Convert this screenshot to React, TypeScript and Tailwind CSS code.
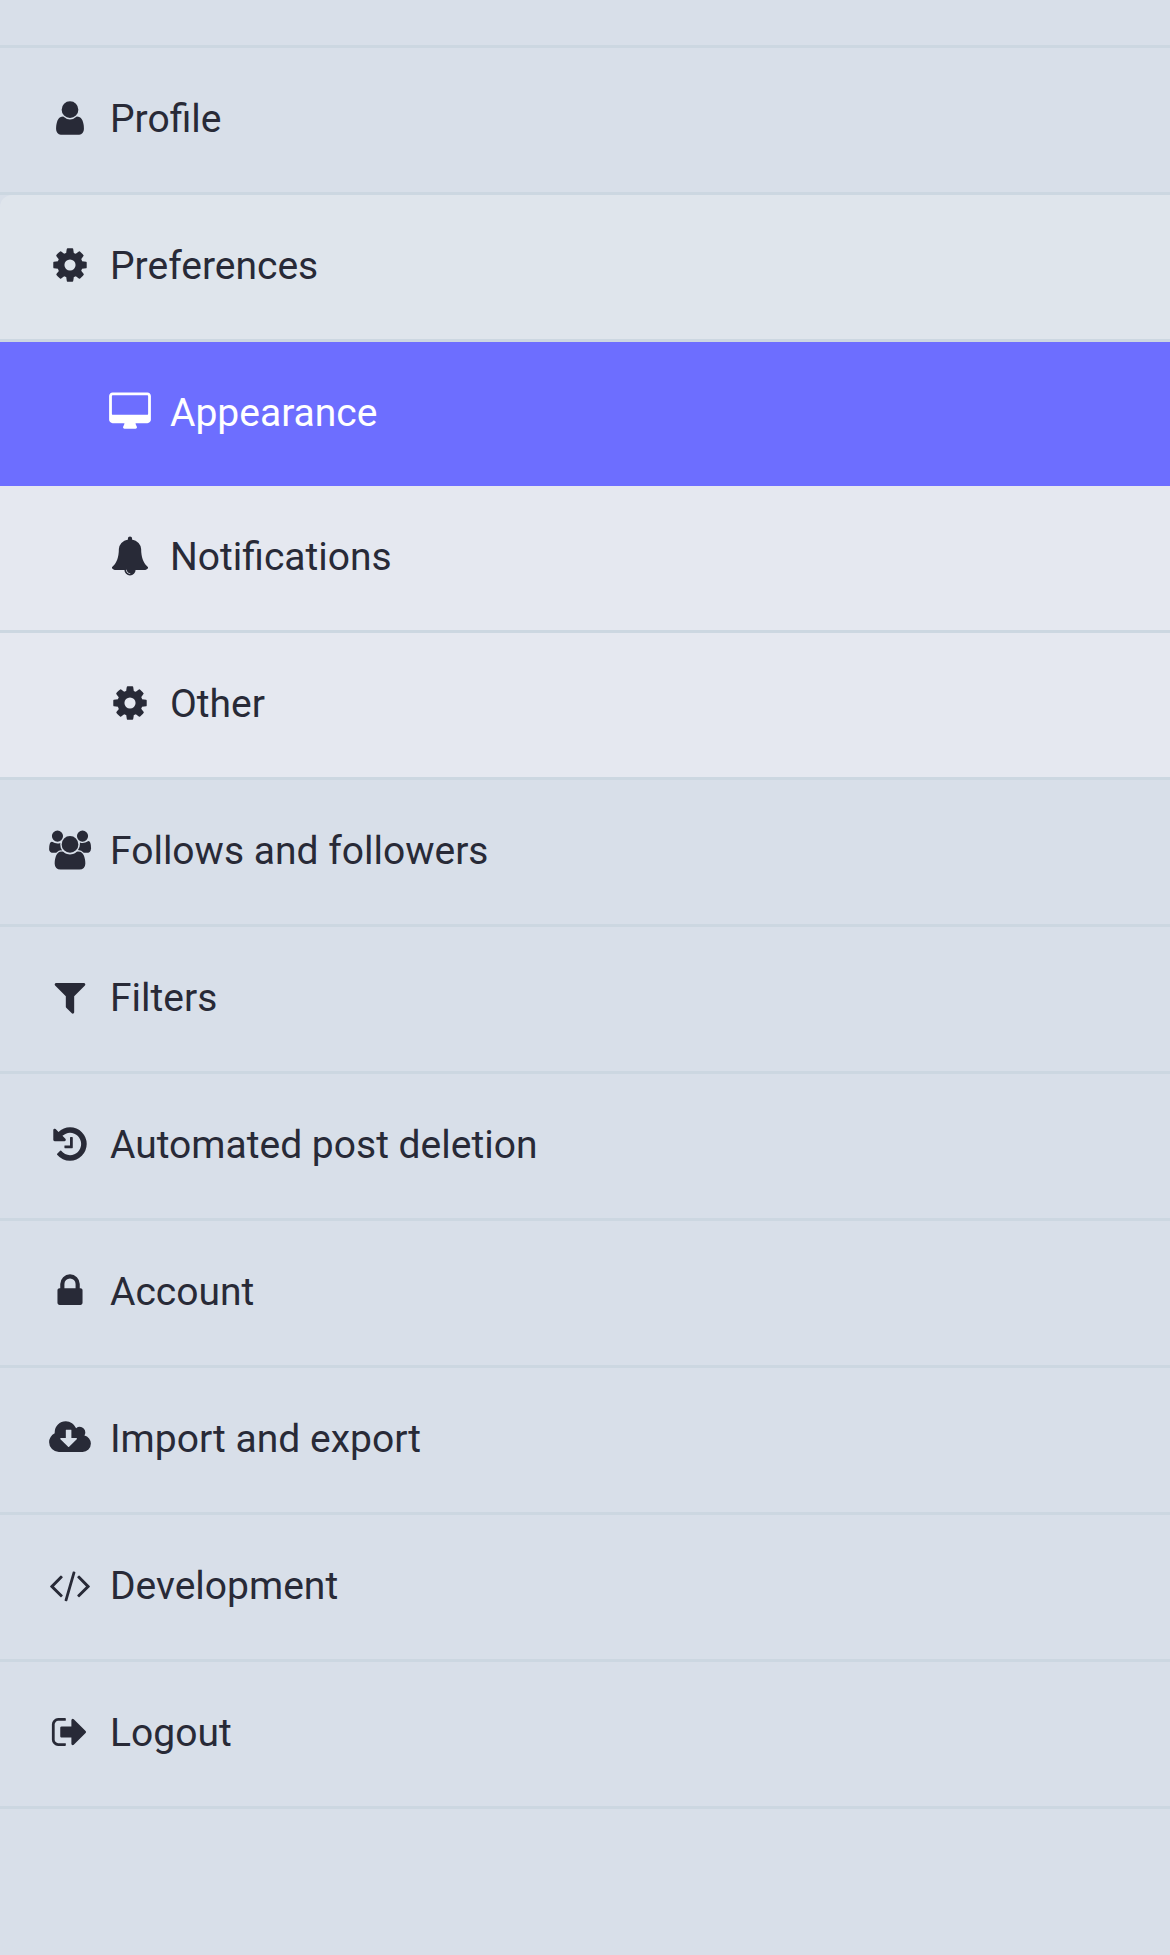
type NavItem = {
  label: string;
  icon: keyof typeof ICONS;
  children?: NavItem[];
  selected?: boolean;
};

// Font Awesome 4 glyphs, drawn on a 1792 unit em square
const ICONS = {
  user: "M1536 1399q0 109-62.5 187t-150.5 78h-854q-88 0-150.5-78t-62.5-187q0-85 8.5-160.5t31.5-152 58.5-131 94-89 134.5-34.5q131 128 313 128t313-128q76 0 134.5 34.5t94 89 58.5 131 31.5 152 8.5 160.5zm-256-887q0 159-112.5 271.5t-271.5 112.5-271.5-112.5-112.5-271.5 112.5-271.5 271.5-112.5 271.5 112.5 112.5 271.5z",
  cog: "M1152 896q0-106-75-181t-181-75-181 75-75 181 75 181 181 75 181-75 75-181zm512-109v222q0 12-8 23t-20 13l-185 28q-19 54-39 91 35 50 107 138 10 12 10 25t-9 23q-27 37-99 108t-94 71q-12 0-26-9l-138-108q-44 23-91 38-16 136-29 186-7 28-36 28h-222q-14 0-24.5-8.5t-11.5-21.5l-28-184q-49-16-90-37l-141 107q-10 9-25 9-14 0-25-11-126-114-165-168-7-10-7-23 0-12 8-23 15-21 51-66.5t54-70.5q-27-50-41-99l-183-27q-13-2-21-12.5t-8-23.5v-222q0-12 8-23t19-13l186-28q14-46 39-92-40-57-107-138-10-12-10-24 0-10 9-23 26-36 98.5-107.5t94.5-71.5q13 0 26 10l138 107q44-23 91-38 16-136 29-186 7-28 36-28h222q14 0 24.5 8.5t11.5 21.5l28 184q49 16 90 37l142-107q9-9 24-9 13 0 25 10 129 119 165 170 7 8 7 22 0 12-8 23-15 21-51 66.5t-54 70.5q26 50 41 98l183 28q13 2 21 12.5t8 23.5z",
  desktop:
    "M1728 992v-832q0-13-9.5-22.5t-22.5-9.5h-1600q-13 0-22.5 9.5t-9.5 22.5v832q0 13 9.5 22.5t22.5 9.5h1600q13 0 22.5-9.5t9.5-22.5zm128-832v1088q0 66-47 113t-113 47h-544q0 37 16 77.5t32 71 16 43.5q0 26-19 45t-45 19h-512q-26 0-45-19t-19-45q0-14 16-44t32-70 16-78h-544q-66 0-113-47t-47-113v-1088q0-66 47-113t113-47h1600q66 0 113 47t47 113z",
  bell: "M912 1696q0-16-16-16-59 0-101.5-42.5t-42.5-101.5q0-16-16-16t-16 16q0 73 51.5 124.5t124.5 51.5q16 0 16-16zm816-288q0 52-38 90t-90 38h-448q0 106-75 181t-181 75-181-75-75-181h-448q-52 0-90-38t-38-90q50-42 91-88t85-119.5 74.5-158.5 50-206 19.5-260q0-152 117-282.5t307-158.5q-8-19-8-39 0-40 28-68t68-28 68 28 28 68q0 20-8 39 190 28 307 158.5t117 282.5q0 139 19.5 260t50 206 74.5 158.5 85 119.5 91 88z",
  users:
    "M529 896q-162 5-265 128h-134q-82 0-138-40.5t-56-118.5q0-353 124-353 6 0 43.5 21t97.5 42.5 119 21.5q67 0 133-23-5 37-5 66 0 159 90 281zm1071 637q0 120-73 189.5t-194 69.5h-874q-121 0-194-69.5t-73-189.5q0-53 3.5-103.5t14-109 26.5-108.5 43-97.5 62-81 85.5-53.5 111.5-20q10 0 43 21.5t73 48 107 48 135 21.5 135-21.5 107-48 73-48 43-21.5q61 0 111.5 20t85.5 53.5 62 81 43 97.5 26.5 108.5 14 109 3.5 103.5zm-1024-1277q0 106-75 181t-181 75-181-75-75-181 75-181 181-75 181 75 75 181zm704 384q0 159-112.5 271.5t-271.5 112.5-271.5-112.5-112.5-271.5 112.5-271.5 271.5-112.5 271.5 112.5 112.5 271.5zm576 225q0 78-56 118.5t-138 40.5h-134q-103-123-265-128 90-122 90-281 0-29-5-66 66 23 133 23 59 0 119-21.5t97.5-42.5 43.5-21q124 0 124 353zm-128-609q0 106-75 181t-181 75-181-75-75-181 75-181 181-75 181 75 75 181z",
  filter:
    "M1595 295q17 41-14 70l-493 493v742q0 42-39 59-13 5-25 5-27 0-45-19l-256-256q-19-19-19-45v-486l-493-493q-31-29-14-70 17-39 59-39h1280q42 0 59 39z",
  history:
    "M1664 896q0 156-61 298t-164 245-245 164-298 61q-172 0-327-72.5t-264-204.5q-7-10-6.5-22.5t8.5-20.5l137-138q10-9 25-9 16 2 23 12 73 95 179 147t225 52q104 0 198.5-40.5t163.5-109.5 109.5-163.5 40.5-198.5-40.5-198.5-109.5-163.5-163.5-109.5-198.5-40.5q-98 0-188 35.5t-160 101.5l137 138q31 30 14 69-17 40-59 40h-448q-26 0-45-19t-19-45v-448q0-42 40-59 39-17 69 14l130 129q107-101 244.5-156.5t284.5-55.5q156 0 298 61t245 164 164 245 61 298zm-640-288v448q0 14-9 23t-23 9h-320q-14 0-23-9t-9-23v-64q0-14 9-23t23-9h224v-352q0-14 9-23t23-9h64q14 0 23 9t9 23z",
  lock: "M640 768h512v-192q0-106-75-181t-181-75-181 75-75 181v192zm832 96v576q0 40-28 68t-68 28h-960q-40 0-68-28t-28-68v-576q0-40 28-68t68-28h32v-192q0-184 132-316t316-132 316 132 132 316v192h32q40 0 68 28t28 68z",
  cloud:
    "M1216 928q0-14-9-23t-23-9h-224v-352q0-13-9.5-22.5t-22.5-9.5h-192q-13 0-22.5 9.5t-9.5 22.5v352h-224q-13 0-22.5 9.5t-9.5 22.5q0 14 9 23l352 352q9 9 23 9t23-9l351-351q10-12 10-24zm640 224q0 159-112.5 271.5t-271.5 112.5h-1088q-185 0-316.5-131.5t-131.5-316.5q0-130 70-240t188-165q-2-30-2-43 0-212 150-362t362-150q156 0 285.5 87t188.5 231q71-62 166-62 106 0 181 75t75 181q0 76-41 138 130 31 213.5 135.5t83.5 238.5z",
  code: "M553 1399l-50 50q-10 10-23 10t-23-10l-466-466q-10-10-10-23t10-23l466-466q10-10 23-10t23 10l50 50q10 10 10 23t-10 23l-393 393 393 393q10 10 10 23t-10 23zm591-1067l-373 1291q-4 13-15.5 19.5t-23.5 2.5l-62-17q-13-4-19.5-15.5t-2.5-24.5l373-1291q4-13 15.5-19.5t23.5-2.5l62 17q13 4 19.5 15.5t2.5 24.5zm657 651l-466 466q-10 10-23 10t-23-10l-50-50q-10-10-10-23t10-23l393-393-393-393q-10-10-10-23t10-23l50-50q10-10 23-10t23 10l466 466q10 10 10 23t-10 23z",
  signOut:
    "M704 1440q0 4 1 20t.5 26.5-3 23.5-10 19.5-20.5 6.5h-320q-119 0-203.5-84.5t-84.5-203.5v-704q0-119 84.5-203.5t203.5-84.5h320q13 0 22.5 9.5t9.5 22.5q0 4 1 20t.5 26.5-3 23.5-10 19.5-20.5 6.5h-320q-66 0-113 47t-47 113v704q0 66 47 113t113 47h312l11.5 1 11.5 3 8 5.5 7 9 2 13.5zm928-544q0 26-19 45l-544 544q-19 19-45 19t-45-19-19-45v-288h-448q-26 0-45-19t-19-45v-384q0-26 19-45t45-19h448v-288q0-26 19-45t45-19 45 19l544 544q19 19 19 45z",
};

const NAV: NavItem[] = [
  { label: "Profile", icon: "user" },
  {
    label: "Preferences",
    icon: "cog",
    children: [
      { label: "Appearance", icon: "desktop", selected: true },
      { label: "Notifications", icon: "bell" },
      { label: "Other", icon: "cog" },
    ],
  },
  { label: "Follows and followers", icon: "users" },
  { label: "Filters", icon: "filter" },
  { label: "Automated post deletion", icon: "history" },
  { label: "Account", icon: "lock" },
  { label: "Import and export", icon: "cloud" },
  { label: "Development", icon: "code" },
  { label: "Logout", icon: "signOut" },
];

export default function App() {
  return (
    <div className="min-h-screen bg-[#d8dfe9] pt-[45px] font-['Roboto','Noto_Sans',sans-serif] text-[39px] text-[#282a37]">
      <nav>
        <ul className="border-t-[3px] border-[#ccd7e1]">
          {NAV.map((item) => (
            <li key={item.label}>
              <NavLink item={item} />
              {item.children && (
                <ul className="bg-[#e5e8f0]">
                  {item.children.map((child) => (
                    <li key={child.label}>
                      <NavLink item={child} nested />
                    </li>
                  ))}
                </ul>
              )}
            </li>
          ))}
        </ul>
      </nav>
    </div>
  );
}

function NavLink({ item, nested = false }: { item: NavItem; nested?: boolean }) {
  const indent = nested ? "pl-[105px]" : "pl-[45px]";
  const border = item.selected ? "" : "border-b-[3px] border-[#ccd7e1]";
  const tone = item.selected
    ? "bg-[#6d6eff] text-white"
    : item.children
      ? "rounded-tl-xl bg-[#dfe5ec]"
      : "";
  return (
    <a href="#" className={`block ${border} ${tone}`}>
      <span className={`flex h-36 items-center gap-[15px] pb-1 ${indent}`}>
        <Icon name={item.icon} />
        <span className="pt-0.5">{item.label}</span>
      </span>
    </a>
  );
}

function Icon({ name }: { name: keyof typeof ICONS }) {
  return (
    <span className="flex w-[50px] shrink-0 justify-center">
      <svg
        viewBox="-23 -23 1838 1838"
        className="size-10 overflow-visible"
        fill="currentColor"
        aria-hidden="true"
      >
        <path d={ICONS[name]} />
      </svg>
    </span>
  );
}
